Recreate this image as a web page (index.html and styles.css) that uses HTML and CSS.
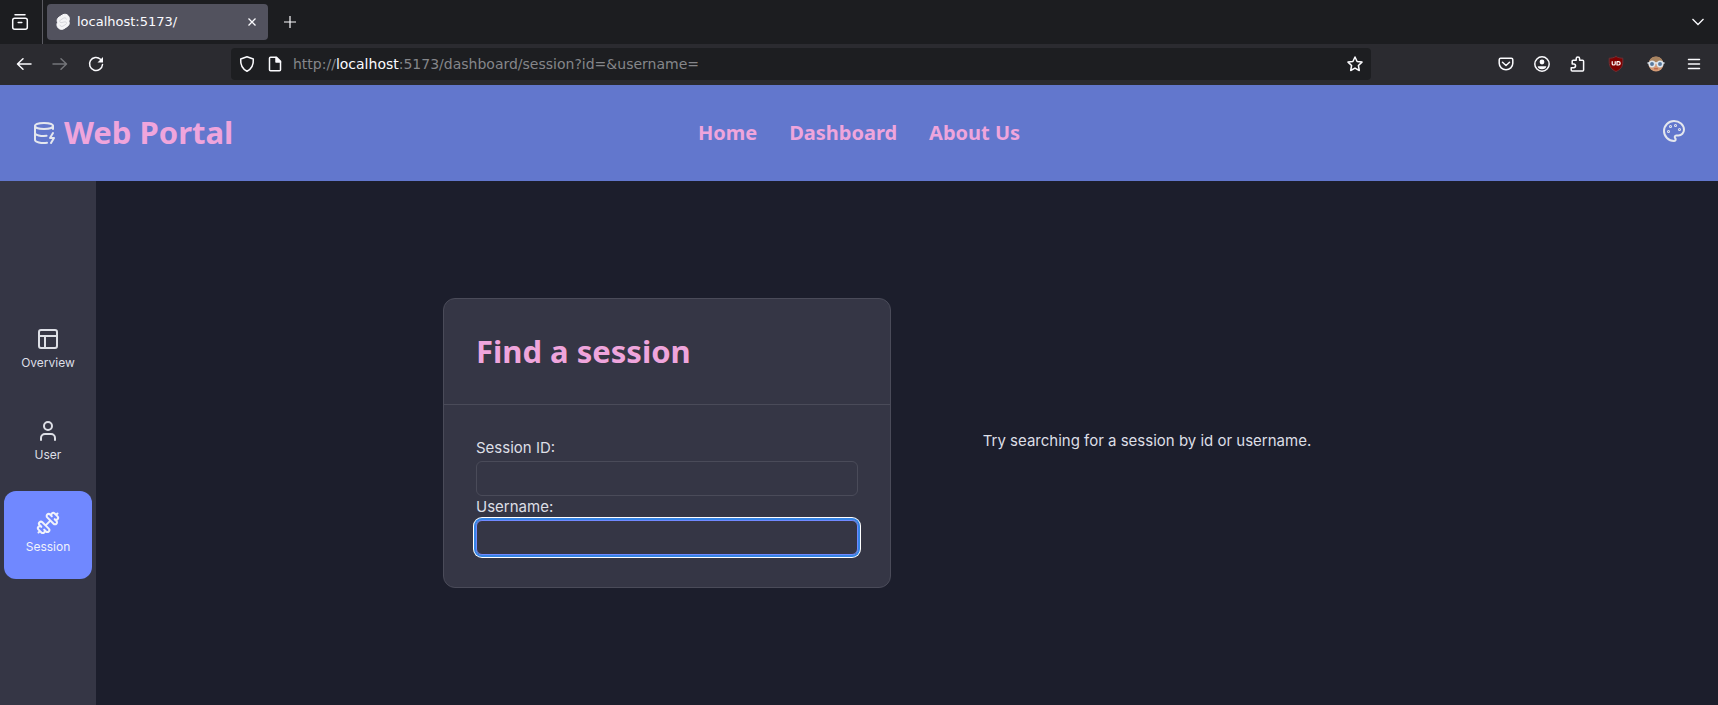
FILE: index.html
```html
<!DOCTYPE html>
<html lang="en">
<head>
<meta charset="utf-8">
<meta name="viewport" content="width=device-width, initial-scale=1">
<title>Web Portal</title>
<link rel="stylesheet" href="styles.css">
</head>
<body>
<div class="tabbar">
  <button class="tool-btn view-btn" aria-label="Firefox View"><svg class="chrome-icon" viewBox="0 0 16 16"><path d="M3 .7h10"/><rect x=".7" y="4.200" width="14.600" height="11" rx="2"/><path d="M6.200 8.500h3.600"/></svg></button>
  <div class="tab">
    <svg class="favicon" viewBox="0 0 14 16"><path fill="#f4f4f6" d="M12.600 2.200C11.200.2 8.500-.3 6.500.9L3 3.200C2 3.800 1.400 4.700 1.200 5.800c-.2.900 0 1.900.4 2.700-.8 1.200-.9 2.800-.2 4.200 1.200 2.500 4.200 3.400 6.500 2l3.500-2.300c1-.6 1.600-1.500 1.800-2.600.2-.9 0-1.900-.4-2.700.8-1.500.8-3.400-.2-4.900z"/><path fill="none" stroke="#d6d6dc" d="M10.500 5.500C10 3.500 8.500 3.600 7.500 4.200L4.500 6c-1.300.9-.9 2.600.5 2.700L9 7.800c1.800 0 2 1.700.9 2.500l-3 1.900c-1.400.7-2.700 0-3-1.400"/></svg>
    <span class="tab-title">localhost:5173/</span>
    <button class="tab-close" aria-label="Close tab"><svg viewBox="0 0 8 8"><path d="M.5.5l7 7M7.500.5l-7 7"/></svg></button>
  </div>
  <button class="tool-btn new-tab" aria-label="New tab"><svg viewBox="0 0 12 12"><path d="M6 0v12M0 6h12"/></svg></button>
  <button class="tool-btn tabs-menu" aria-label="List all tabs"><svg viewBox="0 0 12 8"><path d="M.5 1L6 6.500 11.500 1"/></svg></button>
</div>
<div class="toolbar">
  <div class="nav-buttons">
    <button class="tool-btn" aria-label="Back"><svg class="chrome-icon" viewBox="0 0 16 16"><path d="M15 8H2M7 2.700L1.500 8 7 13.300"/></svg></button>
    <button class="tool-btn" aria-label="Forward" disabled><svg class="chrome-icon" viewBox="0 0 16 16"><path d="M1 8h13M9 2.700L14.500 8 9 13.300"/></svg></button>
    <button class="tool-btn" aria-label="Reload"><svg class="chrome-icon" viewBox="0 0 16 16"><path d="M12.500 3.300A6.500 6.500 0 1 0 14.500 8.500"/><path class="solid thin" d="M15 1v5.500H9.500z"/></svg></button>
  </div>
  <div class="urlbar">
    <span class="site-info">
      <svg class="chrome-icon" viewBox="0 0 16 16"><path d="M8 .8L14.300 3c.3 4.500-.7 9.500-6.300 12.200C2.400 12.500 1.400 7.500 1.700 3z"/></svg>
      <svg class="chrome-icon" viewBox="0 0 16 16"><path d="M3.500 1.200h6l4 4v8.600a1 1 0 0 1-1 1h-9a1 1 0 0 1-1-1V2.200a1 1 0 0 1 1-1z"/><path class="solid" d="M9 1.500V6h4.500z"/></svg>
    </span>
    <span class="url">http://<span class="host">localhost</span>:5173/dashboard/session?id=&amp;username=</span>
    <button class="bookmark" aria-label="Bookmark this page"><svg class="chrome-icon" viewBox="0 0 16 16"><path d="M8 1l2.100 4.500 4.900.6-3.600 3.400.9 5L8 12.100 3.700 14.500l.9-5L1 6.100l4.900-.6z"/></svg></button>
  </div>
  <div class="extensions">
    <button class="tool-btn" aria-label="Save to Pocket"><svg class="chrome-icon" viewBox="0 0 16 16"><path d="M2.700 2.200h10.600a1.500 1.500 0 0 1 1.500 1.500v3.600a6.800 6.500 0 0 1-13.600 0V3.700a1.500 1.500 0 0 1 1.500-1.500zM4.500 6.300L8 9.500l3.500-3.200"/></svg></button>
    <button class="tool-btn" aria-label="Account"><svg class="chrome-icon" viewBox="0 0 16 16"><circle cx="8" cy="8" r="7.200"/><circle class="solid thin" cx="8" cy="6" r="2.400"/><path class="solid thin" d="M3.700 10.200h8.600c0 1.700-1.800 3-4.300 3s-4.300-1.300-4.300-3z"/></svg></button>
    <button class="tool-btn" aria-label="Extensions"><svg class="chrome-icon" viewBox="0 0 16 16"><path d="M2.200 8V5.200a1 1 0 0 1 1-1h3V2.600a1.700 1.700 0 0 1 3.400 0v1.600h3a1 1 0 0 1 1 1v8.900a1 1 0 0 1-1 1H2.200a1 1 0 0 1-1-1v-2.400h2.500a1.800 1.800 0 0 0 0-3.700z"/></svg></button>
    <button class="tool-btn wide" aria-label="uBlock Origin"><svg class="chrome-icon" viewBox="0 0 16 16"><path d="M8 .5c2 1.300 4.500 1.700 6.800 1.700V6c0 4.700-2.300 7.500-6.800 9.500C3.500 13.500 1.200 10.700 1.200 6V2.200C3.500 2.200 6 1.800 8 .5z" fill="#800000" stroke="#6e3034" stroke-width="1"/><path d="M4.200 5.700V8c0 1.300 3 1.300 3 0V5.700" stroke="#fff" stroke-width="1.200"/><path d="M9 5.700h1.500c2.200 0 2.200 3.300 0 3.300H9z" stroke="#fff" stroke-width="1.200"/></svg></button>
    <button class="tool-btn wide" aria-label="User extension"><svg class="chrome-icon" viewBox="0 0 16 16"><g stroke="none"><circle cx="8" cy="8" r="7.500" fill="#d49b76"/><path d="M1 6a7.300 7.300 0 0 1 14 0z" fill="#a88461"/></g><path d="M0 7h16" stroke="#dce6f0"/><circle cx="4" cy="8" r="2.700" fill="#57789b" stroke="#dce6f0"/><circle cx="12" cy="8" r="2.700" fill="#57789b" stroke="#dce6f0"/><path d="M6.500 12.800h3" stroke="#b5543c" stroke-width="1"/></svg></button>
    <button class="tool-btn" aria-label="Menu"><svg class="chrome-icon" viewBox="0 0 16 16"><path d="M2.500 3.500h11M2.500 8h11M2.500 12.500h11"/></svg></button>
  </div>
</div>
<header class="app-header">
  <a class="brand" href="#"><svg class="icon" viewBox="0 0 24 24"><ellipse cx="12" cy="5" rx="9" ry="3"/><path d="M3 5V19A9 3 0 0 0 15 21.840M21 5V8M21 12L18 17H22L19 22M3 12A9 3 0 0 0 14.590 14.870"/></svg><span>Web Portal</span></a>
  <nav class="main-nav"><a href="#">Home</a><a href="#">Dashboard</a><a href="#">About Us</a></nav>
  <button class="theme-btn" aria-label="Theme"><svg class="icon" viewBox="0 0 24 24"><circle cx="13.500" cy="6.500" r=".5"/><circle cx="17.500" cy="10.500" r=".5"/><circle cx="8.500" cy="7.500" r=".5"/><circle cx="6.500" cy="12.500" r=".5"/><path d="M12 2C6.500 2 2 6.500 2 12s4.500 10 10 10c.926 0 1.648-.746 1.648-1.688 0-.437-.18-.835-.437-1.125-.29-.289-.438-.652-.438-1.125a1.640 1.640 0 0 1 1.668-1.668h1.996c3.051 0 5.555-2.503 5.555-5.554C21.965 6.012 17.461 2 12 2z"/></svg></button>
</header>
<div class="workspace">
  <nav class="sidebar">
    <a class="side-link" href="#"><svg class="icon" viewBox="0 0 24 24"><rect width="18" height="18" x="3" y="3" rx="2"/><path d="M3 9h18M9 21V9"/></svg><span>Overview</span></a>
    <a class="side-link" href="#"><svg class="icon" viewBox="0 0 24 24"><path d="M19 21v-2a4 4 0 0 0-4-4H9a4 4 0 0 0-4 4v2"/><circle cx="12" cy="7" r="4"/></svg><span>User</span></a>
    <a class="side-link active" href="#"><svg class="icon" viewBox="0 0 24 24"><path d="M17.596 12.768a2 2 0 1 0 2.829-2.829l-1.768-1.767a2 2 0 0 0 2.828-2.829l-2.828-2.828a2 2 0 0 0-2.829 2.828l-1.767-1.768a2 2 0 1 0-2.829 2.829zM2.500 21.500l1.400-1.400M20.100 3.900l1.400-1.400M5.343 21.485a2 2 0 1 0 2.829-2.828l1.767 1.768a2 2 0 1 0 2.829-2.829l-6.364-6.364a2 2 0 1 0-2.829 2.829l1.768 1.767a2 2 0 0 0-2.828 2.829zM9.600 14.400l4.800-4.800"/></svg><span>Session</span></a>
  </nav>
  <main class="content">
    <div class="panels">
      <section class="card">
        <div class="card-head"><h1>Find a session</h1></div>
        <form class="card-body">
          <label for="session-id">Session ID:</label>
          <input id="session-id" name="id" type="text">
          <label for="username">Username:</label>
          <input id="username" name="username" type="text" class="focused">
        </form>
      </section>
      <p class="hint">Try searching for a session by id or username.</p>
    </div>
  </main>
</div>
</body>
</html>
```
FILE: styles.css
```css
* { box-sizing: border-box; }
body { margin: 0; min-height: 100vh; display: flex; flex-direction: column; background: #1c1e2c; color: #dddfe6; font: 15px/22px Inter, sans-serif; }
button { border: 0; padding: 0; background: none; color: inherit; font: inherit; }
a { color: inherit; text-decoration: none; }
svg { display: block; fill: none; stroke: currentColor; overflow: visible; }

.tabbar { display: flex; align-items: center; height: 44px; background: #1c1d20; color: #fbfbfe; font: 13px/20px "DejaVu Sans", sans-serif; }
.tool-btn { display: grid; place-items: center; width: 36px; height: 36px; }
.tool-btn.wide { width: 40px; }
.tool-btn:disabled { color: #747579; }
.chrome-icon { width: 16px; height: 16px; stroke-width: 1.5; stroke-linecap: round; stroke-linejoin: round; }
.solid { fill: currentColor; }
.thin { stroke: none; }
.view-btn { width: 43px; height: 44px; padding-right: 3px; border-right: 1px solid #5b5b62; }
.tab { display: flex; align-items: center; width: 221px; height: 36px; margin-left: 4px; padding: 0 12px 0 9px; gap: 7px; border-radius: 4px; background: #52525e; }
.favicon { width: 14px; height: 16px; }
.tab-title { flex: 1; }
.tab-close svg { width: 8px; height: 8px; stroke-width: 1.3; }
.new-tab { margin-left: 4px; }
.new-tab svg { width: 12px; height: 12px; stroke-width: 1.2; }
.tabs-menu { margin-left: auto; margin-right: 2px; }
.tabs-menu svg { width: 12px; height: 8px; stroke-width: 1.3; }

.toolbar { display: flex; align-items: center; height: 41px; padding: 0 6px 1px; background: #2b2b30; color: #fbfbfe; }
.nav-buttons { display: flex; width: 225px; }
.urlbar { flex: 1; display: flex; align-items: center; gap: 10px; height: 32px; padding: 0 8px; border-radius: 4px; background: #1d1e21; }
.site-info { display: flex; gap: 12px; }
.url { flex: 1; color: #85868a; font: 14px/20px "DejaVu Sans", sans-serif; }
.host { color: #fbfbfe; }
.extensions { display: flex; justify-content: flex-end; width: 341px; }

.app-header { display: grid; grid-template-columns: 1fr auto 1fr; align-items: center; height: 96px; padding: 0 32px; background: #6277cd; color: #e4e7ee; font-family: "Noto Sans", sans-serif; font-weight: 700; }
.icon { width: 24px; height: 24px; stroke-width: 2; stroke-linecap: round; stroke-linejoin: round; }
.brand { display: flex; align-items: center; gap: 8px; }
.brand span { padding-bottom: 2px; color: #efa5dc; font-size: 31px; line-height: 40px; }
.main-nav { display: flex; gap: 32px; color: #efa5dc; font-size: 20px; line-height: 28px; }
.theme-btn { justify-self: end; padding-bottom: 4px; }

.workspace { flex: 1; display: flex; }
.sidebar { display: flex; flex-direction: column; justify-content: center; gap: 4px; width: 96px; padding: 0 4px; background: #353645; }
.side-link { display: flex; flex-direction: column; align-items: center; justify-content: center; gap: 2px; height: 88px; padding-bottom: 2px; border-radius: 12px; font-size: 12px; line-height: 20px; }
.side-link.active { background: #7088ff; color: #f0f2fb; }
.content { flex: 1; display: grid; align-items: center; justify-items: center; padding: 32px; }
.panels { display: grid; grid-template-columns: 1fr 1fr; gap: 32px; align-items: center; width: 100%; max-width: 928px; }
.card { border: 1px solid #4a4b59; border-radius: 12px; background: #353645; }
.card-head { padding: 32px; border-bottom: 1px solid #4a4b59; }
.card h1 { margin: 0; color: #efa5dc; font: 700 31px/41px "Noto Sans", sans-serif; }
.card-body { display: flex; flex-direction: column; padding: 32px; }
.card-body label { padding-bottom: 2px; }
.card-body input { height: 35px; padding: 4px 12px; border: 1px solid #4a4b59; border-radius: 6px; background: transparent; color: inherit; font: inherit; outline: none; }
.card-body input.focused { border-color: #7088ff; box-shadow: 0 0 0 2px #3584e4, 0 0 0 3px #fff; }
.hint { margin: 0; padding-bottom: 4px; text-align: center; }
```
